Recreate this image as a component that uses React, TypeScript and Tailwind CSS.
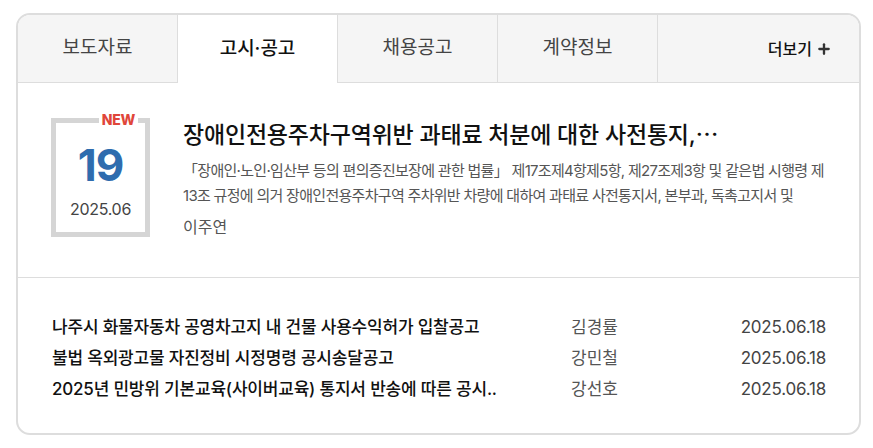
import { Plus } from "lucide-react";

const tabs = ["보도자료", "고시·공고", "채용공고", "계약정보"];

const notices = [
  { title: "나주시 화물자동차 공영차고지 내 건물 사용수익허가 입찰공고", author: "김경률", date: "2025.06.18" },
  { title: "불법 옥외광고물 자진정비 시정명령 공시송달공고", author: "강민철", date: "2025.06.18" },
  { title: "2025년 민방위 기본교육(사이버교육) 통지서 반송에 따른 공시..", author: "강선호", date: "2025.06.18" },
];

export default function App() {
  const active = 1;

  return (
    <div
      className="w-[873px] h-[448px] bg-white pt-[13px] pl-[16px]"
      style={{ fontFamily: 'Inter, "Noto Sans CJK KR", sans-serif' }}
    >
      <div className="w-[845px] h-[422px] border-2 border-[#dddddd] rounded-[14px] overflow-hidden flex flex-col">
        {/* tabs */}
        <div className="flex h-[68px] shrink-0">
          {tabs.map((t, i) => (
            <div
              key={t}
              className={
                i === active
                  ? "w-[160px] flex items-center justify-center border-r border-[#dddddd] bg-white text-[19px] font-medium text-[#111]"
                  : "w-[160px] flex items-center justify-center border-r border-b border-[#dddddd] bg-[#f5f5f5] text-[19px] text-[#444]"
              }
            >
              {t}
            </div>
          ))}
          <div className="flex-1 flex items-center justify-end pr-[27px] bg-[#f5f5f5] border-b border-[#dddddd]">
            <span className="text-[16px] font-medium text-[#111]">더보기</span>
            <Plus className="ml-[4px] w-[16px] h-[16px] text-[#333]" strokeWidth={3.5} />
          </div>
        </div>

        {/* featured */}
        <div className="flex pt-[35px] pl-[33px] pr-[20px] h-[195px] border-b border-[#dddddd] shrink-0">
          <div className="relative w-[99px] h-[119px] border-[5px] border-[#d5d5d5] flex flex-col items-center shrink-0">
            <span className="absolute -top-[13px] right-[7px] bg-white px-[3px] text-[14px] font-extrabold text-[#e0463a] leading-[20px] tracking-[-0.3px]">
              NEW
            </span>
            <span className="mt-[19px] text-[44px] font-bold leading-[46px] text-[#2f6cae] tracking-[-1px]">19</span>
            <span className="mt-[10px] text-[16px] leading-[22px] text-[#444] tracking-[-0.3px]">2025.06</span>
          </div>
          <div className="ml-[33px] flex flex-col min-w-0">
            <div className="text-[23px] font-medium text-[#111] leading-[30px] tracking-[-0.2px] whitespace-nowrap">
              장애인전용주차구역위반 과태료 처분에 대한 사전통지,
              <span className="font-['Noto_Sans_CJK_KR']">…</span>
            </div>
            <p className="mt-[8px] w-[652px] text-[15px] leading-[25px] text-[#555] tracking-[-0.7px]">
              「장애인·노인·임산부 등의 편의증진보장에 관한 법률」 제17조제4항제5항, 제27조제3항 및 같은법 시행령 제13조 규정에 의거 장애인전용주차구역 주차위반 차량에 대하여 과태료 사전통지서, 본부과, 독촉고지서 및
            </p>
            <span className="mt-[7px] text-[16px] leading-[25px] text-[#555]">이주연</span>
          </div>
        </div>

        {/* list */}
        <ul className="pt-[34px] pl-[34px] pr-[33px]">
          {notices.map((n) => (
            <li key={n.title} className="flex items-center h-[31px]">
              <span className="w-[519px] whitespace-nowrap text-[17px] font-medium text-[#111] tracking-[-0.2px]">{n.title}</span>
              <span className="text-[17px] text-[#555]">{n.author}</span>
              <span className="ml-auto text-[17px] text-[#444] tracking-[-0.2px]">{n.date}</span>
            </li>
          ))}
        </ul>
      </div>
    </div>
  );
}
